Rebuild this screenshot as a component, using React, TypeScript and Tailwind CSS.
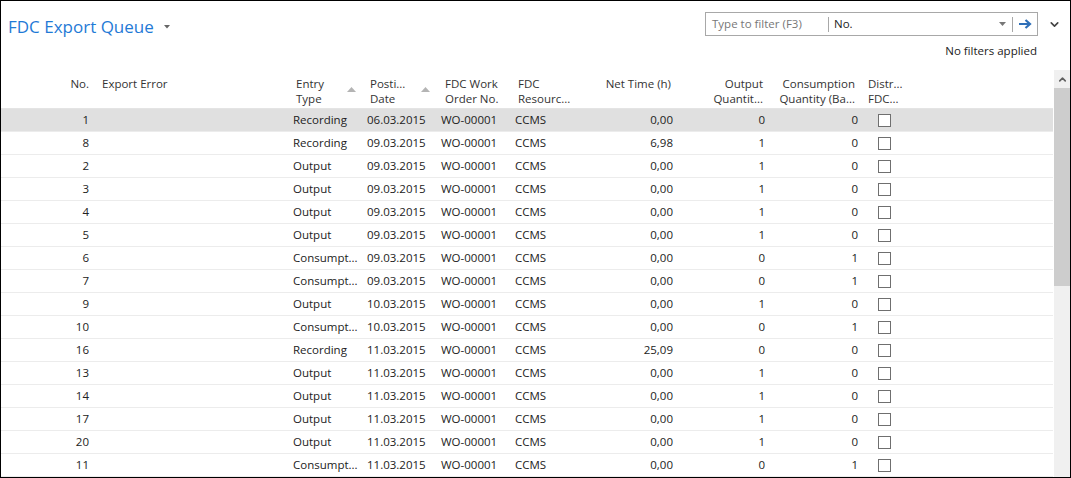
import { ChevronDown, ChevronUp } from "lucide-react"

type Row = {
  no: number
  type: string
  date: string
  net: string
  out: number
  cons: number
}

const rows: Row[] = [
  { no: 1, type: "Recording", date: "06.03.2015", net: "0,00", out: 0, cons: 0 },
  { no: 8, type: "Recording", date: "09.03.2015", net: "6,98", out: 1, cons: 0 },
  { no: 2, type: "Output", date: "09.03.2015", net: "0,00", out: 1, cons: 0 },
  { no: 3, type: "Output", date: "09.03.2015", net: "0,00", out: 1, cons: 0 },
  { no: 4, type: "Output", date: "09.03.2015", net: "0,00", out: 1, cons: 0 },
  { no: 5, type: "Output", date: "09.03.2015", net: "0,00", out: 1, cons: 0 },
  { no: 6, type: "Consumpt...", date: "09.03.2015", net: "0,00", out: 0, cons: 1 },
  { no: 7, type: "Consumpt...", date: "09.03.2015", net: "0,00", out: 0, cons: 1 },
  { no: 9, type: "Output", date: "10.03.2015", net: "0,00", out: 1, cons: 0 },
  { no: 10, type: "Consumpt...", date: "10.03.2015", net: "0,00", out: 0, cons: 1 },
  { no: 16, type: "Recording", date: "11.03.2015", net: "25,09", out: 0, cons: 0 },
  { no: 13, type: "Output", date: "11.03.2015", net: "0,00", out: 1, cons: 0 },
  { no: 14, type: "Output", date: "11.03.2015", net: "0,00", out: 1, cons: 0 },
  { no: 17, type: "Output", date: "11.03.2015", net: "0,00", out: 1, cons: 0 },
  { no: 20, type: "Output", date: "11.03.2015", net: "0,00", out: 1, cons: 0 },
  { no: 11, type: "Consumpt...", date: "11.03.2015", net: "0,00", out: 0, cons: 1 },
]

const cols = "grid grid-cols-[92px_196px_74px_74px_74px_78px_88px_92px_93px_60px_1fr]"

function SortArrow() {
  return (
    <svg width="9" height="5" viewBox="0 0 9 5" className="absolute right-[7px] top-[17px]">
      <path d="M0 5 L4.5 0 L9 5 Z" fill="#b4b4b4" />
    </svg>
  )
}

export default function App() {
  return (
    <div
      className="w-[1071px] h-[478px] border border-black bg-white overflow-hidden flex flex-col text-[#222]"
      style={{ fontFamily: "'Open Sans', 'Noto Sans', sans-serif" }}
    >
      {/* top bar */}
      <div className="h-[69px] flex shrink-0">
        <div className="pl-[7px] pt-[14px] flex items-start">
          <span className="text-[17px] leading-[24px] text-[#1f7ad6]">FDC Export Queue</span>
          <svg width="6" height="4" viewBox="0 0 6 4" className="ml-[10px] mt-[10px]">
            <path d="M0 0 L6 0 L3 3.5 Z" fill="#666" />
          </svg>
        </div>

        <div className="ml-auto pt-[11px] flex flex-col items-end">
          <div className="flex items-center">
            <div className="w-[333px] h-[24px] border border-[#a8a8a8] flex items-center text-[11.5px]">
              <span className="w-[122px] pl-[6px] text-[#777]">Type to filter (F3)</span>
              <span className="w-px h-[15px] bg-[#a8a8a8]" />
              <span className="pl-[5px] flex-1">No.</span>
              <svg width="7" height="4" viewBox="0 0 7 4" className="mr-[6px]">
                <path d="M0 0 L7 0 L3.5 4 Z" fill="#777" />
              </svg>
              <span className="w-px h-[15px] bg-[#a8a8a8]" />
              <svg width="24" height="12" viewBox="0 0 24 12">
                <path d="M6 6 H17 M12.5 2 L17 6 L12.5 10" stroke="#2f6fb8" strokeWidth="2.2" fill="none" />
              </svg>
            </div>
            <div className="w-[32px] flex justify-center">
              <ChevronDown size={13} strokeWidth={3} color="#444" />
            </div>
          </div>
          <div className="mt-[7px] mr-[33px] text-[11.5px] leading-[16px]">No filters applied</div>
        </div>
      </div>

      {/* table + scrollbar */}
      <div className="flex flex-1 min-h-0">
        <div className="w-[1053px] text-[11.5px]">
          <div className={`${cols} h-[39px] border-b border-[#e4e4e4] leading-[15px] text-[#333]`}>
            <div className="pt-[6px] pr-[4px] text-right">No.</div>
            <div className="pt-[6px] pl-[9px]">Export Error</div>
            <div className="pt-[6px] pl-[7px] relative">Entry<br />Type<SortArrow /></div>
            <div className="pt-[6px] pl-[7px] relative">Posti...<br />Date<SortArrow /></div>
            <div className="pt-[6px] pl-[8px]">FDC Work<br />Order No.</div>
            <div className="pt-[6px] pl-[7px]">FDC<br />Resourc...</div>
            <div className="pt-[6px] pr-[6px] text-right">Net Time (h)</div>
            <div className="pt-[6px] pr-[6px] text-right">Output<br />Quantit...</div>
            <div className="pt-[6px] pr-[7px] text-right">Consumption<br />Quantity (Ba...</div>
            <div className="pt-[6px] pl-[6px]">Distr...<br />FDC...</div>
            <div />
          </div>

          {rows.map((r, i) => (
            <div
              key={r.no}
              className={`${cols} h-[23px] items-center border-b border-[#ececec] ${i === 0 ? "bg-[#e0e0e0]" : ""}`}
            >
              <div className="pr-[4px] text-right">{r.no}</div>
              <div />
              <div className="pl-[4px] whitespace-nowrap">{r.type}</div>
              <div className="pl-[4px]">{r.date}</div>
              <div className="pl-[4px]">WO-00001</div>
              <div className="pl-[4px]">CCMS</div>
              <div className="pr-[4px] text-right">{r.net}</div>
              <div className="pr-[4px] text-right">{r.out}</div>
              <div className="pr-[4px] text-right">{r.cons}</div>
              <div className="pl-[16px] flex items-center">
                <span className="w-[13px] h-[13px] border border-[#6f6f6f] bg-white" />
              </div>
              <div />
            </div>
          ))}
        </div>

        <div className="w-[16px] ml-px bg-[#f0f0f0] pt-px flex flex-col">
          <div className="h-[17px] flex items-center justify-center">
            <ChevronUp size={11} strokeWidth={3.5} color="#606060" />
          </div>
          <div className="h-[198px] bg-[#cdcdcd]" />
        </div>
      </div>
    </div>
  )
}
